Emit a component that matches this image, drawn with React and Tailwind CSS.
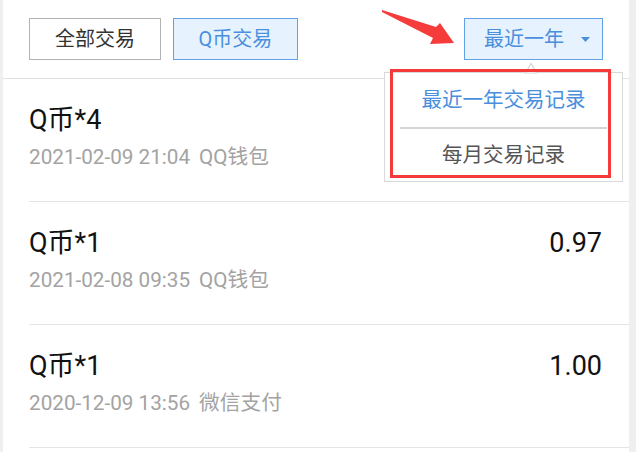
import React from 'react';

const rows = [
  { title: 'Q币*4', time: '2021-02-09 21:04', via: 'QQ钱包', amount: '' },
  { title: 'Q币*1', time: '2021-02-08 09:35', via: 'QQ钱包', amount: '0.97' },
  { title: 'Q币*1', time: '2020-12-09 13:56', via: '微信支付', amount: '1.00' },
];

const font = { fontFamily: 'Roboto, "Noto Sans CJK SC", sans-serif' };

function Row({ title, time, via, amount }) {
  return (
    <div className="ml-[26px] h-[123px] border-b-[1.5px] border-[#e4e4e4] pr-[27px] pt-[24px] flex justify-between">
      <div>
        <div className="text-[27px] leading-[34px] text-[#111]">{title}</div>
        <div className="mt-[8px] text-[20.7px] leading-[24px] text-[#a3a3a3] flex">
          <span>{time}</span>
          <span className="ml-[9px]">{via}</span>
        </div>
      </div>
      <div className="text-[27px] leading-[34px] text-[#111]">{amount}</div>
    </div>
  );
}

export default function App() {
  return (
    <div className="w-[636px] h-[452px] bg-[#efefef] flex overflow-hidden" style={font}>
      <div className="relative ml-[3px] w-[626px] h-full bg-white">
        {/* filter bar */}
        <div className="h-[79px] border-b-[1.5px] border-[#e2e2e2] flex items-start pt-[18px] pl-[26px] pr-[26px]">
          <button className="w-[132px] h-[42px] border-[1.5px] border-[#b3b3b3] bg-white text-[20px] text-[#333]">
            全部交易
          </button>
          <button className="ml-[12px] w-[125px] h-[42px] border-[1.5px] border-[#62a1e6] bg-[#e6f3ff] text-[20px] text-[#4a8fdd]">
            Q币交易
          </button>
          <button className="ml-auto w-[139px] h-[42px] border-[1.5px] border-[#62a1e6] bg-[#e6f3ff] text-[20px] text-[#4a8fdd] flex items-center pl-[19px]">
            最近一年
            <svg className="ml-[17px]" width="9" height="5" viewBox="0 0 9 5">
              <polygon points="0,0 9,0 4.5,5" fill="#4a8fdd" />
            </svg>
          </button>
        </div>

        {rows.map((r, i) => (
          <Row key={i} {...r} />
        ))}

        {/* dropdown menu */}
        <div className="absolute right-[6px] top-[72px] w-[239px] h-[110px] bg-white border-[1.5px] border-[#d9d9d9] flex flex-col">
          <div className="h-[54px] flex items-center justify-center text-[20.5px] text-[#4a8fdd]">
            最近一年交易记录
          </div>
          <div className="mx-[15px] h-[2px] bg-[#d4d4d4]" />
          <div className="flex-1 flex items-center justify-center text-[20.5px] text-[#555]">
            每月交易记录
          </div>
        </div>
        <svg className="absolute left-[521px] top-[62px]" width="14" height="12" viewBox="0 0 14 12">
          <polygon points="1.5,11 7,1.5 12.5,11" fill="white" stroke="#d5d5d5" strokeWidth="1.2" />
        </svg>

        {/* annotation */}
        <div className="absolute left-[387px] top-[69px] w-[221px] h-[109px] border-[3px] border-[#f53a3a]" />
        <svg className="absolute left-[370px] top-0" width="90" height="55" viewBox="370 0 90 55">
          <polygon points="379,10 433,27 437,23 451,43 427,44 430,38 379,12" fill="#f63b3b" />
        </svg>
      </div>
    </div>
  );
}
